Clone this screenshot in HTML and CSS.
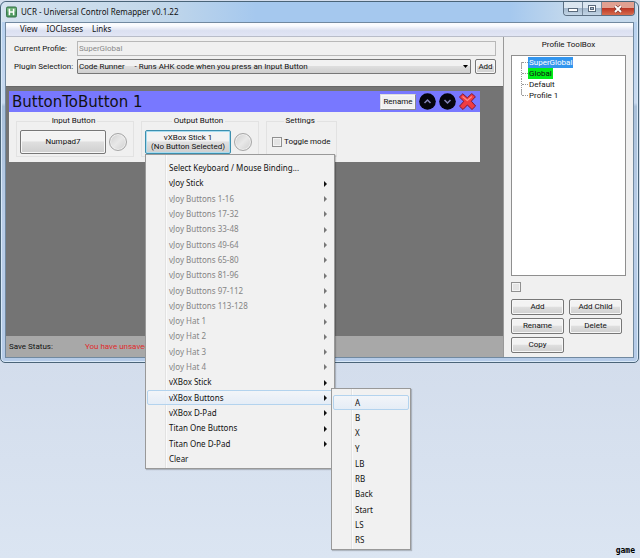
FILE: index.html
```html
<!DOCTYPE html>
<html lang="en">
<head>
<meta charset="utf-8">
<title>UCR - Universal Control Remapper v0.1.22</title>
<link rel="stylesheet" href="styles.css">
</head>
<body>
<div class="window">
  <header class="titlebar">
    <svg class="app-icon" viewBox="0 0 12 12" aria-hidden="true"><rect x=".5" y=".5" width="11" height="11" rx="1.5" fill="#4f9a60" stroke="#2f6d43"/><path d="M1 1.5h10v4H1z" fill="#7dba83" opacity=".7"/><path d="M3.7 2.5v7M8.3 2.5v7M3.7 6h4.6" stroke="#fff" stroke-width="1.7" fill="none"/></svg>
    <h1 class="title">UCR - Universal Control Remapper v0.1.22</h1>
    <div class="caption-buttons">
      <button class="cap" aria-label="Minimize"><svg viewBox="0 0 10 8" width="10" height="8"><rect x=".5" y="3.5" width="9" height="3" fill="#fff" stroke="#5a6a7c"/></svg></button>
      <button class="cap" aria-label="Maximize"><svg viewBox="0 0 10 8" width="10" height="8"><rect x="1.5" y=".5" width="7" height="6" fill="#fff" stroke="#5a6a7c"/><rect x="3.5" y="2.5" width="3" height="2" fill="#aabccd" stroke="#5a6a7c"/></svg></button>
      <button class="cap cap-close" aria-label="Close"><svg viewBox="0 0 10 8" width="10" height="8"><path d="M2 1l6 6M8 1L2 7" stroke="#7c3a35" stroke-width="3.2"/><path d="M2 1l6 6M8 1L2 7" stroke="#fff" stroke-width="1.9"/></svg></button>
    </div>
  </header>
  <div class="client">
    <nav class="menubar"><a href="#">View</a><a href="#">IOClasses</a><a href="#">Links</a></nav>
    <div class="columns">
      <main class="main">
        <form class="form">
          <label for="profile">Current Profile:</label>
          <input class="field" id="profile" type="text" value="SuperGlobal" disabled>
          <label for="plugin">Plugin Selection:</label>
          <div class="select-row">
            <div class="select-wrap">
              <select id="plugin"><option>Code Runner &nbsp; &nbsp; - Runs AHK code when you press an Input Button</option></select>
              <svg class="select-arrow" viewBox="0 0 5 3" width="5" height="3"><path d="M0 0h5L2.500 3z" fill="#000"/></svg>
            </div>
            <button class="btn add-plugin" type="button">Add</button>
          </div>
        </form>
        <div class="workspace">
          <section class="plugin">
            <div class="plugin-head">
              <h2>ButtonToButton 1</h2>
              <button class="btn rename" type="button">Rename</button>
              <button class="icon-btn" aria-label="Move up"><svg viewBox="0 0 17 17" width="17" height="17"><circle cx="8.500" cy="8.500" r="8.300" fill="#05050c"/><path d="M5.500 10l3-3 3 3" fill="none" stroke="#8585b8" stroke-width="1.500"/></svg></button>
              <button class="icon-btn" aria-label="Move down"><svg viewBox="0 0 17 17" width="17" height="17"><circle cx="8.500" cy="8.500" r="8.300" fill="#05050c"/><path d="M5.500 7l3 3 3-3" fill="none" stroke="#8585b8" stroke-width="1.500"/></svg></button>
              <button class="icon-btn" aria-label="Remove"><svg viewBox="0 0 17 17" width="17" height="17"><path d="M3.800 .8L8.300 4.800 12.800 .6l3.600 3.200L12.300 8.200l4.300 4.800-3.600 3.500-4.600-4.500L4 16.500.5 13.200l4.300-4.900L.4 4z" fill="#f03c42" stroke="#7d1838" stroke-width="1" stroke-linejoin="round"/><path d="M3.500 3.500l4.800 4 4.500-4" fill="none" stroke="#ff8a88" stroke-width="1.200"/></svg></button>
            </div>
            <div class="groups">
              <fieldset class="group">
                <legend>Input Button</legend>
                <button class="btn binding" type="button">Numpad7</button>
                <span class="lamp"></span>
              </fieldset>
              <fieldset class="group">
                <legend>Output Button</legend>
                <div class="binding-anchor">
                  <button class="btn binding active" type="button">vXBox Stick 1<br>(No Button Selected)</button>
                  <ul class="popup binding-menu">
                    <li><button>Select Keyboard / Mouse Binding...</button></li>
                    <li class="sub"><button>vJoy Stick</button></li>
                    <li class="sub"><button disabled>vJoy Buttons 1-16</button></li>
                    <li class="sub"><button disabled>vJoy Buttons 17-32</button></li>
                    <li class="sub"><button disabled>vJoy Buttons 33-48</button></li>
                    <li class="sub"><button disabled>vJoy Buttons 49-64</button></li>
                    <li class="sub"><button disabled>vJoy Buttons 65-80</button></li>
                    <li class="sub"><button disabled>vJoy Buttons 81-96</button></li>
                    <li class="sub"><button disabled>vJoy Buttons 97-112</button></li>
                    <li class="sub"><button disabled>vJoy Buttons 113-128</button></li>
                    <li class="sub"><button disabled>vJoy Hat 1</button></li>
                    <li class="sub"><button disabled>vJoy Hat 2</button></li>
                    <li class="sub"><button disabled>vJoy Hat 3</button></li>
                    <li class="sub"><button disabled>vJoy Hat 4</button></li>
                    <li class="sub"><button>vXBox Stick</button></li>
                    <li class="sub"><button class="hot">vXBox Buttons</button>
                      <ul class="popup submenu">
                        <li><button class="hot">A</button></li>
                        <li><button>B</button></li>
                        <li><button>X</button></li>
                        <li><button>Y</button></li>
                        <li><button>LB</button></li>
                        <li><button>RB</button></li>
                        <li><button>Back</button></li>
                        <li><button>Start</button></li>
                        <li><button>LS</button></li>
                        <li><button>RS</button></li>
                      </ul>
                    </li>
                    <li class="sub"><button>vXBox D-Pad</button></li>
                    <li class="sub"><button>Titan One Buttons</button></li>
                    <li class="sub"><button>Titan One D-Pad</button></li>
                    <li><button>Clear</button></li>
                  </ul>
                </div>
                <span class="lamp"></span>
              </fieldset>
              <fieldset class="group">
                <legend>Settings</legend>
                <label class="check"><input type="checkbox">Toggle mode</label>
              </fieldset>
            </div>
          </section>
        </div>
        <footer class="status"><span>Save Status:</span><span class="warn">You have unsaved</span></footer>
      </main>
      <aside class="toolbox">
        <h2>Profile ToolBox</h2>
        <ul class="tree">
          <li><span class="selected">SuperGlobal</span></li>
          <li><span class="current">Global</span></li>
          <li><span>Default</span></li>
          <li><span>Profile 1</span></li>
        </ul>
        <input type="checkbox" aria-label="Option">
        <div class="tools">
          <button class="btn">Add</button>
          <button class="btn">Add Child</button>
          <button class="btn">Rename</button>
          <button class="btn">Delete</button>
          <button class="btn">Copy</button>
        </div>
      </aside>
    </div>
  </div>
</div>
<p class="desktop-label">game</p>
</body>
</html>
```

FILE: styles.css
```css
* { box-sizing: border-box; }

body {
  margin: 0;
  padding: 1px 1px 0 0;
  min-height: 100vh;
  display: flex;
  flex-direction: column;
  background: linear-gradient(#d3ddec 65%, #dbe5f2);
  font: 8px/10px Roboto, Arial, sans-serif;
  color: #111;
}

h1, h2, ul, p { margin: 0; padding: 0; font-weight: normal; list-style: none; }
button, input, select { font: inherit; color: inherit; margin: 0; }
button { padding: 0; }

.window {
  border: 1px solid #4a6478;
  border-radius: 6px 6px 5px 5px;
  padding: 0 4px 4px;
  background: linear-gradient(#b3cfee, #c9daf0 28%, #a9c0da 29%, #b9cde8 60%, #b5cbe8);
  box-shadow: inset 0 0 0 1px #d9e9f8;
}

.titlebar { display: flex; align-items: center; height: 20px; margin: 0 -3px; padding: 0 2px 0 4px; border-radius: 5px 5px 0 0; background: linear-gradient(90deg, #d5e2ee, #c2d7ea 25%, #a5c8ee 40%, #a5c8ee 80%, #c5d9ec 90%); }
.app-icon { width: 11px; height: 12px; }
.title { flex: 1; margin-left: 4px; font: 8px/12px "Noto Sans", sans-serif; }
.caption-buttons { display: flex; align-self: flex-start; border: 1px solid #5c6f83; border-top: 0; border-radius: 0 0 4px 4px; overflow: hidden; }
.cap { display: grid; place-items: center; width: 19px; height: 13px; border: 0; border-right: 1px solid #75879a; background: linear-gradient(#dbe6f0 45%, #a5b9cd 50%, #c4d6e7); }
.cap-close { width: 32px; border-right: 0; background: linear-gradient(#e1a091 45%, #bd3826 50%, #d66c4e); }

.client { border: 1px solid #7189a0; background: #f0f0f0; }
.menubar { display: flex; gap: 9px; height: 14px; padding: 0 14px; border-bottom: 1px solid #b9bdc9; background: linear-gradient(#fafbfe 20%, #dbe0f1 60%, #e2e6f5); font: 8px/12px "Noto Sans", sans-serif; }
.menubar a { color: inherit; text-decoration: none; }
.columns { display: flex; }
.main { flex: 1; min-width: 0; display: flex; flex-direction: column; }

.form { display: grid; grid-template-columns: 63px 1fr; row-gap: 3px; align-items: center; padding: 4px 7px 12px 8px; }
.field { width: 100%; height: 15px; padding: 0 1px; border: 1px solid #b8b8b8; background: #f0f0f0; color: #8a8a8a; }
.select-row { display: flex; gap: 4px; }
.select-wrap { flex: 1; position: relative; }
.select-wrap select { display: block; width: 100%; height: 15px; padding: 0 1px; appearance: none; border: 1px solid #777; border-radius: 1px; background: linear-gradient(#f2f2f2 45%, #dedede 50%, #cfcfcf); }
.select-arrow { position: absolute; right: 3px; top: 6px; }
.btn { height: 16px; border: 1px solid #777; border-radius: 2px; background: linear-gradient(#f3f3f3 45%, #dfdfdf 50%, #cfcfcf); box-shadow: inset 0 0 0 1px #f7f7f7; }
.add-plugin { width: 21px; height: 15px; }

.workspace { flex: 1; padding: 4px 23px 4px 3px; border-top: 1px solid #686868; background: #747474; }
.plugin { background: #f0f0f0; }
.plugin-head { display: flex; align-items: center; gap: 3px; height: 21px; padding: 0 4px 0 3px; background: #7878ff; }
.plugin-head h2 { flex: 1; font: 15px/20px "DejaVu Sans", Verdana, sans-serif; }
.rename { width: 36px; border-radius: 0; background: #f0f0f0; border-color: #ddd #888 #888 #ddd; }
.icon-btn { border: 0; background: none; width: 17px; height: 17px; }

.groups { display: flex; gap: 7px; padding: 4px 6px 5px 7px; }
.group { display: flex; align-items: center; gap: 3px; min-width: 0; height: 41px; margin: 0; padding: 1px 6px 0 3px; border: 1px solid #e2e2e2; }
.group legend { margin: 0 auto; padding: 0 2px; }
.binding { width: 86px; height: 24px; line-height: 9px; white-space: nowrap; }
.active { border-color: #3c8fae; box-shadow: inset 0 0 0 1px #a8dcf0; }
.binding-anchor { position: relative; }
.lamp { width: 18px; height: 18px; border: 1px solid #a6a6a6; border-radius: 50%; background: linear-gradient(135deg, #cecece, #e8e8e8 50%, #cfcfcf); box-shadow: inset 0 0 0 1px #eee; }
.check { display: flex; align-items: center; gap: 2px; padding-left: 2px; }
input[type="checkbox"] { appearance: none; width: 10px; height: 10px; border: 1px solid #909090; background: #e4e4e4; box-shadow: inset 0 0 0 1px #f4f4f4; }

.popup { position: absolute; z-index: 2; display: grid; grid-auto-rows: 1fr; padding: 6px 1px 1px; border: 1px solid #999; background: linear-gradient(90deg, transparent 19px, #e2e2e2 19px 20px, #fafafa 20px 21px, transparent 21px) #f1f1f1; box-shadow: 1px 1px 1px #0003; font: 8px/12px "Noto Sans", sans-serif; }
.binding-menu { top: 100%; left: 0; width: 190px; height: 315px; }
.submenu { top: -2px; left: calc(100% - 2px); width: 80px; height: 162px; }
.popup li { position: relative; display: grid; }
.popup button { border: 1px solid transparent; border-radius: 2px; padding: 0 0 0 21px; background: none; text-align: left; white-space: nowrap; }
.popup button:disabled { color: #858585; }
.popup .hot { border-color: #b3d3ee; background: linear-gradient(#f3f6fbcc, #e2ecf8cc); }
.sub::after { content: ""; position: absolute; right: 6px; top: 5px; border: solid transparent; border-width: 3px 0 3px 3px; border-left-color: #111; }
.sub:has(> :disabled)::after { border-left-color: #777; }

.status { display: flex; gap: 32px; height: 21px; padding: 0 3px; background: #a8a8a8; line-height: 21px; }
.warn { color: #e02b2b; }

.toolbox { width: 130px; padding: 3px 7px 3px; border-left: 1px solid #999; background: #f0f0f0; }
.toolbox h2 { margin: 0 0 5px; font: inherit; text-align: center; }
.tree { min-height: 221px; margin-bottom: 6px; padding: 1px 9px; border: 1px solid #8f8f8f; background: #fff; }
.tree li { display: flex; align-items: center; height: 11px; border-left: 1px dotted #999; }
.tree li:first-child { border-image: linear-gradient(transparent 50%, #aaa 50%) 1; border-style: solid; border-width: 0 0 0 1px; }
.tree li:last-child { border-image: linear-gradient(#aaa 50%, transparent 50%) 1; border-style: solid; border-width: 0 0 0 1px; }
.tree li::before { content: ""; width: 6px; border-top: 1px dotted #999; }
.tree span { padding: 0 1px; line-height: 11px; }
.selected { background: #3295ee; color: #fff; }
.current { background: #00ef18; }
.toolbox > input { display: block; margin-bottom: 7px; }
.tools { display: grid; grid-template-columns: 53px 53px; gap: 3px 5px; padding-bottom: 1px; }

.desktop-label { margin: auto 4px 2px auto; font: bold 8px/10px "DejaVu Sans Mono", monospace; color: #000; }
```
